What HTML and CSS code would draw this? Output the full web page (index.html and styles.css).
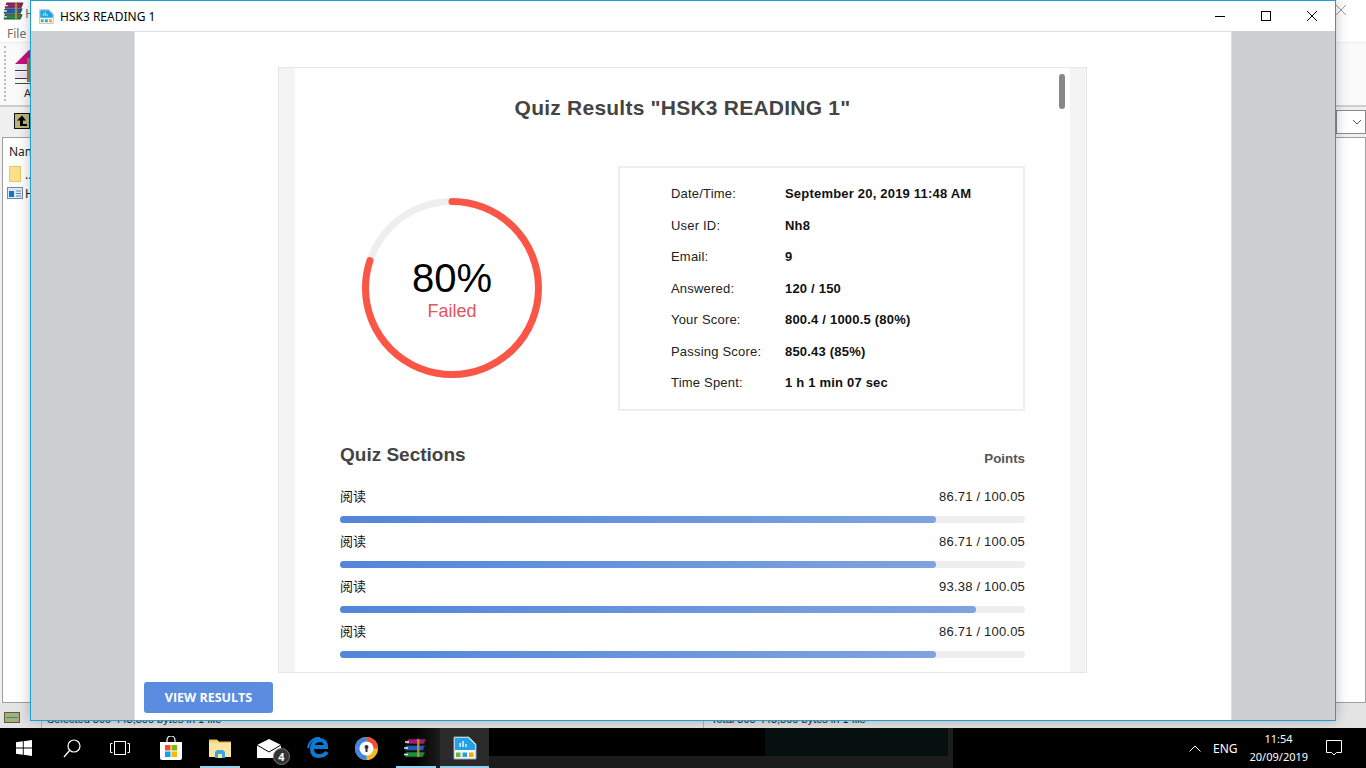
FILE: index.html
```html
<!DOCTYPE html>
<html lang="en">
<head>
    <meta charset="UTF-8">
    <meta name="viewport" content="width=device-width, initial-scale=1.0">
    <title>HSK3 READING 1</title>
    <link rel="stylesheet" href="styles.css">
</head>
<body>
    <svg class="defs" width="0" height="0">
        <symbol id="quiz-icon" viewBox="0 0 24 24">
            <path d="M1 1h15l7 7v15H1z" fill="#f4f8fa" stroke="#8fa9b8"/>
            <path d="M2 2h13.500l6.500 6.500V14H2z" fill="#23a0e6"/>
            <path d="M7 11V7M10 11V5M13 11V8" stroke="#fff" stroke-width="1.300"/>
            <rect x="3" y="16.500" width="4.500" height="4.500" fill="#6cb33f"/>
            <rect x="9.500" y="16.500" width="4.500" height="4.500" fill="#23a0e6"/>
            <rect x="16" y="16.500" width="4.500" height="4.500" fill="#f2a900"/>
        </symbol>
        <symbol id="rar-icon" viewBox="0 0 24 20">
            <path d="M4 1h18l-2 5H2z" fill="#a51c6c" stroke="#222" stroke-width="0.800"/>
            <path d="M2 7.500h19l-2 5H1z" fill="#1d5fb0" stroke="#222" stroke-width="0.800"/>
            <path d="M2 14h19l-2 5H1z" fill="#1e8f3c" stroke="#222" stroke-width="0.800"/>
            <path d="M1 4h4M0 10h4M0 16.500h4" stroke="#eee" stroke-width="1.500"/>
            <path d="M13 1h2.500v18H13z" fill="#c0923f" opacity="0.850"/>
        </symbol>
    </svg>

    <!-- app behind the quiz window -->
    <div class="rar-app">
        <div class="rar-row rar-title">
            <svg class="rar-logo" width="22" height="18"><use href="#rar-icon"/></svg>
            <span class="rar-name">H</span>
            <svg class="rar-close" width="12" height="12" viewBox="0 0 12 12"><path d="M1 1l10 10M11 1L1 11" stroke="#9a9a9a" fill="none"/></svg>
        </div>
        <div class="rar-row rar-menu">File</div>
        <div class="rar-row rar-tools">
            <span class="grip"></span>
            <div class="rar-add">
                <svg width="16" height="36" viewBox="0 0 16 36">
                    <path d="M0 16L14 2h2v14z" fill="#c4127e"/>
                    <path d="M0 16h16v6H0z" fill="#eef0f5"/>
                    <path d="M0 24h16v6H0z" fill="#e8eaef"/>
                    <path d="M0 22.500h16M0 30.500h16" stroke="#5a2a50"/>
                    <path d="M0 35.500h16" stroke="#2d5a2d"/>
                    <path d="M12 10h4v24h-4z" fill="#a8793a"/>
                </svg>
                <span>A</span>
            </div>
        </div>
        <div class="rar-row rar-address">
            <svg class="up-icon" width="16" height="16" viewBox="0 0 16 16">
                <rect x="0.500" y="0.500" width="15" height="15" fill="#bdb57c" stroke="#111"/>
                <path d="M8 2.500L3 7.500h3v5.500h7v-2H9V7.500h3z" fill="#000"/>
            </svg>
            <div class="rar-combo">
                <svg width="10" height="6" viewBox="0 0 10 6"><path d="M1 1l4 4 4-4" stroke="#555" fill="none"/></svg>
            </div>
        </div>
        <div class="rar-list">
            <div class="rar-head">Name</div>
            <div class="rar-file">
                <span class="folder-icon"></span>
                <span>..</span>
            </div>
            <div class="rar-file rar-file-exe">
                <svg width="16" height="12" viewBox="0 0 16 12">
                    <rect x="0.500" y="0.500" width="15" height="11" fill="#dfe8f2" stroke="#6c8ba8"/>
                    <rect x="2" y="4" width="5" height="6" fill="#1273d0"/>
                    <path d="M9 4h5M9 6.500h5M9 9h5" stroke="#6c8ba8"/>
                </svg>
                <span>H</span>
            </div>
        </div>
        <div class="rar-status">
            <div class="status-first">
                <svg width="16" height="11" viewBox="0 0 16 11">
                    <rect x="0.500" y="0.500" width="15" height="10" fill="#a8ad7c" stroke="#5b5f3c"/>
                    <path d="M2 5.500h12" stroke="#2f8f7f"/>
                </svg>
            </div>
            <span class="status-cell status-left">Selected 800 443,800 bytes in 1 file</span>
            <span class="status-cell status-right">Total 800 443,800 bytes in 1 file</span>
        </div>
    </div>

    <div class="window">
        <div class="title-bar">
            <svg class="title-icon" width="15" height="15"><use href="#quiz-icon"/></svg>
            <span class="title-text">HSK3 READING 1</span>
            <div class="win-controls">
                <span class="win-btn"><svg width="10" height="10" viewBox="0 0 10 10"><path d="M0 5.500h10" stroke="#000"/></svg></span>
                <span class="win-btn"><svg width="10" height="10" viewBox="0 0 10 10"><rect x="0.500" y="0.500" width="9" height="9" fill="none" stroke="#000"/></svg></span>
                <span class="win-btn"><svg width="10" height="10" viewBox="0 0 10 10"><path d="M0 0l10 10M10 0L0 10" stroke="#000" fill="none"/></svg></span>
            </div>
        </div>
        <div class="win-body">
            <div class="side"></div>
            <div class="center">
                <div class="quiz-frame">
                    <div class="quiz-page">
                        <span class="scroll-thumb"></span>
                        <h1 class="quiz-title">Quiz Results "HSK3 READING 1"</h1>

                        <div class="summary">
                            <div class="ring">
                                <svg width="180" height="180" viewBox="0 0 180 180">
                                    <circle cx="90" cy="90" r="86.500" fill="none" stroke="#eeeeee" stroke-width="7"/>
                                    <circle class="ring-value" cx="90" cy="90" r="86.500" fill="none" stroke="#fa5546" stroke-width="7" stroke-linecap="round" stroke-dasharray="434.800 543.500"/>
                                </svg>
                                <div class="ring-label">
                                    <div class="ring-pct">80%</div>
                                    <div class="ring-state">Failed</div>
                                </div>
                            </div>
                            <div class="info-box">
                                <div class="info-row"><span class="info-key">Date/Time:</span><span class="info-val">September 20, 2019 11:48 AM</span></div>
                                <div class="info-row"><span class="info-key">User ID:</span><span class="info-val">Nh8</span></div>
                                <div class="info-row"><span class="info-key">Email:</span><span class="info-val">9</span></div>
                                <div class="info-row"><span class="info-key">Answered:</span><span class="info-val">120 / 150</span></div>
                                <div class="info-row"><span class="info-key">Your Score:</span><span class="info-val">800.4 / 1000.5 (80%)</span></div>
                                <div class="info-row"><span class="info-key">Passing Score:</span><span class="info-val">850.43 (85%)</span></div>
                                <div class="info-row"><span class="info-key">Time Spent:</span><span class="info-val">1 h 1 min 07 sec</span></div>
                            </div>
                        </div>

                        <div class="sections-head">
                            <h2>Quiz Sections</h2>
                            <span class="points-head">Points</span>
                        </div>
                        <div class="section">
                            <div class="section-top"><span class="section-name">阅读</span><span>86.71 / 100.05</span></div>
                            <div class="bar"><div class="bar-fill" style="width: 596px"></div></div>
                        </div>
                        <div class="section">
                            <div class="section-top"><span class="section-name">阅读</span><span>86.71 / 100.05</span></div>
                            <div class="bar"><div class="bar-fill" style="width: 596px"></div></div>
                        </div>
                        <div class="section">
                            <div class="section-top"><span class="section-name">阅读</span><span>93.38 / 100.05</span></div>
                            <div class="bar"><div class="bar-fill" style="width: 636px"></div></div>
                        </div>
                        <div class="section">
                            <div class="section-top"><span class="section-name">阅读</span><span>86.71 / 100.05</span></div>
                            <div class="bar"><div class="bar-fill" style="width: 596px"></div></div>
                        </div>
                    </div>
                </div>
                <button class="view-btn">VIEW RESULTS</button>
            </div>
            <div class="side"></div>
        </div>
    </div>

    <div class="taskbar">
        <div class="task-fixed">
            <span class="task-btn">
                <svg width="16" height="16" viewBox="0 0 16 16"><path d="M0 2.300L6.800 1.300V7.500H0zM7.700 1.200L16 0V7.500H7.700zM0 8.500H6.800V14.700L0 13.700zM7.700 8.500H16V16L7.700 14.800z" fill="#fff"/></svg>
            </span>
            <span class="task-btn">
                <svg width="18" height="19" viewBox="0 0 18 19"><circle cx="11" cy="7" r="6" fill="none" stroke="#fff" stroke-width="1.200"/><path d="M6.800 11.300L1 18" stroke="#fff" stroke-width="1.300"/></svg>
            </span>
            <span class="task-btn">
                <svg width="20" height="14" viewBox="0 0 20 14"><rect x="4.500" y="0.500" width="11" height="13" fill="none" stroke="#fff"/><path d="M2.500 2.500H.5v9h2M17.500 2.500h2v9h-2" fill="none" stroke="#fff"/></svg>
            </span>
        </div>
        <div class="task-apps">
            <span class="task-app">
                <svg width="24" height="24" viewBox="0 0 24 24">
                    <path d="M8 6V4a4 4 0 0 1 8 0v2" fill="none" stroke="#fff" stroke-width="1.200"/>
                    <path d="M1 6h22v16a2 2 0 0 1-2 2H3a2 2 0 0 1-2-2z" fill="#fff"/>
                    <rect x="6" y="9" width="5.500" height="5.500" fill="#f25022"/>
                    <rect x="12.500" y="9" width="5.500" height="5.500" fill="#7fba00"/>
                    <rect x="6" y="15.500" width="5.500" height="5.500" fill="#00a4ef"/>
                    <rect x="12.500" y="15.500" width="5.500" height="5.500" fill="#ffb900"/>
                </svg>
            </span>
            <span class="task-app task-open">
                <svg width="22" height="19" viewBox="0 0 22 19">
                    <path d="M0 1h8l2 2h12v15H0z" fill="#f3d57c"/>
                    <path d="M0 4h22v14H0z" fill="#fbe69f"/>
                    <path d="M0 1h8l2 2h12" fill="none" stroke="#e2b84f"/>
                    <path d="M6 19v-6l2-2h6l2 2v6z" fill="#3aa6e0"/>
                    <path d="M9 19v-4h4v4z" fill="#fbe69f"/>
                </svg>
            </span>
            <span class="task-app mail-app">
                <svg width="24" height="19" viewBox="0 0 24 19">
                    <path d="M0 6L12 0l12 6v13H0z" fill="#fff"/>
                    <path d="M0 6l12 7 12-7" fill="none" stroke="#000"/>
                </svg>
                <span class="mail-badge">4</span>
            </span>
            <span class="task-app">
                <svg width="22" height="22" viewBox="0 0 22 22">
                    <path d="M20 15c-2 3-5 4-8 4-5 0-7-3-7-7 0-5 3-9 8-9 4 0 6 3 6 7H5" fill="none" stroke="#0f78d4" stroke-width="4"/>
                    <path d="M1 11C2 4 8 0 13 1" fill="none" stroke="#0f78d4" stroke-width="2"/>
                </svg>
            </span>
            <span class="task-app">
                <svg width="23" height="23" viewBox="0 0 23 23">
                    <circle cx="11.500" cy="11.500" r="11.500" fill="#f5b91f"/>
                    <path d="M11.500 0A11.500 11.500 0 0 1 23 11.500H11.500z" fill="#e9503e"/>
                    <path d="M0 11.500A11.500 11.500 0 0 1 11.500 0v11.500z" fill="#3f86e6"/>
                    <path d="M0 11.500A11.500 11.500 0 0 0 11.500 23v-11.500z" fill="#3f86e6"/>
                    <circle cx="11.500" cy="11.500" r="7" fill="#fff"/>
                    <circle cx="11.500" cy="10" r="2" fill="#333"/>
                    <rect x="10.500" y="10.500" width="2" height="4.500" fill="#333"/>
                </svg>
            </span>
            <span class="task-app task-open rar-slot">
                <svg width="24" height="20"><use href="#rar-icon"/></svg>
            </span>
            <span class="task-app task-current">
                <svg width="24" height="24"><use href="#quiz-icon"/></svg>
            </span>
        </div>
        <div class="task-thumb">
            <div class="thumb-inner"></div>
        </div>
        <div class="tray">
            <svg class="tray-caret" width="12" height="7" viewBox="0 0 12 7"><path d="M.5 6.500L6 1l5.500 5.500" fill="none" stroke="#fff"/></svg>
            <span class="tray-lang">ENG</span>
            <div class="tray-clock">
                <div>11:54</div>
                <div>20/09/2019</div>
            </div>
            <svg class="tray-note" width="16" height="16" viewBox="0 0 16 16"><path d="M.5.500h15v12h-5l-2.500 2.500-2.500-2.500h-5z" fill="none" stroke="#fff"/></svg>
        </div>
    </div>
</body>
</html>
```

FILE: styles.css
```css
* {
    box-sizing: border-box;
}

html, body {
    margin: 0;
    height: 768px;
    overflow: hidden;
}

body {
    width: 1366px;
    position: relative;
    background: #f0f0f0;
    font-family: "Liberation Sans", Arial, sans-serif;
}

.defs {
    position: absolute;
}

/* winrar window, mostly hidden */
.rar-app {
    height: 728px;
    display: flex;
    flex-direction: column;
    background: #f0f0f0;
    font-family: "Noto Sans", sans-serif;
    font-size: 12px;
    color: #222;
}

.rar-row {
    display: flex;
    align-items: center;
}

.rar-title {
    height: 25px;
    padding-left: 3px;
    background: #fff;
}

.rar-logo {
    flex: none;
    margin-bottom: 3px;
}

.rar-name {
    color: #777;
    font-size: 13px;
}

.rar-close {
    margin-left: auto;
    margin-right: 19px;
    margin-bottom: 5px;
}

.rar-menu {
    height: 17px;
    padding-left: 7px;
    color: #6d6d6d;
    background: #fff;
}

.rar-tools {
    height: 65px;
    padding-left: 4px;
    border-top: 1px solid #ededed;
    border-bottom: 2px solid #cfcfcf;
    background: #fafafa;
    align-items: flex-start;
}

.grip {
    width: 2px;
    height: 55px;
    margin-top: 3px;
    border-left: 2px dotted #bbb;
}

.rar-add {
    margin-left: 9px;
    margin-top: 5px;
    display: flex;
    flex-direction: column;
    align-items: flex-end;
    width: 16px;
    font-size: 11px;
    color: #333;
}

.rar-add span {
    margin-top: 1px;
}

.rar-address {
    height: 30px;
    padding-left: 14px;
    background: #f0f0f0;
    justify-content: space-between;
}

.up-icon {
    margin-bottom: 2px;
}

.rar-combo {
    width: 30px;
    height: 24px;
    border: 1px solid #8a8a8a;
    background: #fff;
    display: flex;
    align-items: center;
    justify-content: flex-end;
    padding-right: 3px;
}

.rar-list {
    flex: 1;
    margin-left: 2px;
    border: 1px solid #a0a0a0;
    background: #fff;
    padding-left: 6px;
}

.rar-head {
    height: 26px;
    line-height: 28px;
    font-size: 12px;
}

.rar-file {
    display: flex;
    align-items: center;
    gap: 4px;
    height: 20px;
}

.rar-file-exe {
    margin-left: -2px;
    height: 20px;
    gap: 2px;
    margin-top: -1px;
}

.folder-icon {
    width: 12px;
    height: 16px;
    background: #fbe08c;
    border: 1px solid #e8c763;
}

.rar-status {
    height: 25px;
    flex: none;
    display: flex;
    background: #e4e4e4;
    font-family: "Liberation Sans", Arial, sans-serif;
    font-size: 11px;
    line-height: 14px;
}

.status-first {
    width: 41px;
    padding: 9px 0 0 4px;
}

.status-cell {
    border-left: 1px solid #b5b5b5;
    padding: 9px 0 0 5px;
}

.status-left {
    width: 662px;
}

.status-right {
    padding-left: 7px;
}

/* quiz window */
.window {
    position: absolute;
    left: 30px;
    top: 0;
    width: 1306px;
    height: 721px;
    display: flex;
    flex-direction: column;
    border: 1px solid #1ba1d8;
    background: #fff;
    box-shadow: 0 0 12px rgba(0, 0, 0, 0.25);
}

.title-bar {
    height: 30px;
    flex: none;
    display: flex;
    align-items: center;
    padding-left: 8px;
    background: #fff;
}

.title-text {
    margin-left: 6px;
    font-family: "Noto Sans", sans-serif;
    font-size: 12px;
    color: #000;
}

.win-controls {
    margin-left: auto;
    display: flex;
}

.win-btn {
    width: 46px;
    height: 30px;
    display: flex;
    align-items: center;
    justify-content: center;
}

.win-body {
    flex: 1;
    display: grid;
    grid-template-columns: 103px 1fr 103px;
    min-height: 0;
}

.side {
    background: #ccd0d3;
}

.center {
    border: 1px solid #e0e0e0;
    border-bottom: 0;
    padding-top: 35px;
    background: #fff;
}

.quiz-frame {
    margin-left: 143px;
    width: 809px;
    height: 606px;
    border: 1px solid #e6e6e6;
    padding: 0 16px;
    background: #f4f4f4;
}

.quiz-page {
    position: relative;
    height: 100%;
    overflow: hidden;
    background: #fff;
    padding: 0 45px;
}

.scroll-thumb {
    position: absolute;
    right: 5px;
    top: 6px;
    width: 6px;
    height: 35px;
    border-radius: 3px;
    background: #888;
}

.quiz-title {
    margin: 0;
    padding-top: 28px;
    font-size: 21px;
    letter-spacing: 0.230px;
    line-height: 24px;
    font-weight: bold;
    text-align: center;
    color: #444;
}

.summary {
    margin-top: 46px;
    display: flex;
    align-items: flex-start;
    padding-left: 22px;
    gap: 76px;
}

.ring {
    display: grid;
    width: 180px;
    height: 180px;
    margin-top: 32px;
}

.ring > * {
    grid-area: 1 / 1;
}

.ring-value {
    transform: rotate(-90deg);
    transform-origin: 90px 90px;
}

.ring-label {
    text-align: center;
    padding-top: 56px;
}

.ring-pct {
    font-size: 40px;
    line-height: 48px;
    color: #000;
}

.ring-state {
    font-size: 18px;
    line-height: 22px;
    margin-top: -2px;
    color: #e2555f;
}

.info-box {
    width: 407px;
    height: 245px;
    border: 2px solid #eee;
    padding: 10px 0 0 51px;
}

.info-row {
    display: flex;
    height: 31.500px;
    align-items: center;
    font-size: 13px;
    letter-spacing: 0.200px;
    color: #222;
}

.info-key {
    width: 114px;
}

.info-val {
    font-weight: bold;
    color: #111;
}

.sections-head {
    margin-top: 32px;
    display: flex;
    justify-content: space-between;
    align-items: flex-end;
    margin-bottom: 21px;
}

.sections-head h2 {
    margin: 0;
    font-size: 19px;
    line-height: 24px;
    color: #444;
}

.points-head {
    font-size: 13.300px;
    line-height: 16px;
    font-weight: bold;
    color: #555;
}

.section {
    height: 45px;
}

.section-top {
    display: flex;
    justify-content: space-between;
    height: 18px;
    line-height: 18px;
    font-size: 13px;
    letter-spacing: 0.200px;
    color: #222;
}

.section-name {
    font-family: "Noto Sans CJK SC", sans-serif;
    font-size: 13px;
    line-height: 15px;
    letter-spacing: 0;
    color: #111;
}

.bar {
    margin-top: 10px;
    height: 7px;
    border-radius: 4px;
    background: #eee;
}

.bar-fill {
    height: 7px;
    border-radius: 4px;
    background: linear-gradient(to right, #5286da, #7fa3df);
}

.view-btn {
    display: block;
    margin: 9px 0 0 9px;
    width: 129px;
    height: 31px;
    padding: 0;
    border: none;
    border-radius: 3px;
    background: #5a8ce0;
    color: #fff;
    font-family: "Open Sans", sans-serif;
    font-weight: bold;
    font-size: 12.500px;
}

/* windows taskbar */
.taskbar {
    position: absolute;
    left: 0;
    right: 0;
    bottom: 0;
    height: 40px;
    display: flex;
    background: #000;
    color: #fff;
    font-family: "Noto Sans", sans-serif;
}

.task-fixed {
    display: flex;
}

.task-btn {
    width: 48px;
    display: flex;
    align-items: center;
    justify-content: center;
}

.task-apps {
    display: flex;
    margin-left: 2px;
}

.task-app {
    position: relative;
    width: 49px;
    display: flex;
    align-items: center;
    justify-content: center;
}

.task-open::after, .task-current::after {
    content: "";
    position: absolute;
    bottom: 0;
    height: 2px;
    width: 40px;
    background: #8fd3f0;
}

.task-current {
    background: #2b2b2b;
}

.task-current::after {
    width: 100%;
}

.rar-slot {
    background: linear-gradient(to right, #000 45%, #1c1c1c);
}

.mail-badge {
    position: absolute;
    left: 29px;
    top: 20px;
    width: 17px;
    height: 17px;
    border-radius: 50%;
    background: #333;
    border: 1px solid #777;
    font-size: 11px;
    font-weight: bold;
    line-height: 15px;
    text-align: center;
}

.task-thumb {
    width: 464px;
    background: #1c1c1c;
}

.thumb-inner {
    width: 459px;
    height: 28px;
    background: #000;
    background-image: linear-gradient(#06100f, #06100f);
    background-repeat: no-repeat;
    background-position: right top;
    background-size: 183px 28px;
}

.tray {
    flex: 1;
    display: flex;
    align-items: center;
    padding-left: 236px;
    font-size: 12px;
}

.tray-caret {
    flex: none;
}

.tray-lang {
    margin-left: 12px;
}

.tray-clock {
    margin-left: 12px;
    width: 58px;
    text-align: center;
    font-size: 11px;
    line-height: 18px;
}

.tray-note {
    flex: none;
    margin-left: 18px;
}
```
